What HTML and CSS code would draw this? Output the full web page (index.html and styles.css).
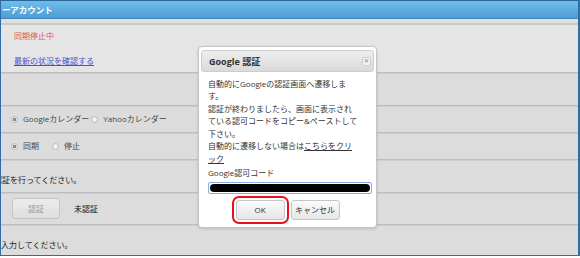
FILE: index.html
```html
<!DOCTYPE html>
<html lang="ja">
<head>
<meta charset="utf-8">
<title>Google 認証</title>
<link rel="stylesheet" href="styles.css">
</head>
<body>
<div class="frame">
  <div class="topbar">ーアカウント</div>
  <div class="strip"></div>
  <div class="status">
    <p class="stopped">同期停止中</p>
    <a class="check" href="#">最新の状況を確認する</a>
  </div>
  <div class="rows">
    <div class="row row-blank"></div>
    <div class="row row-radio">
      <label class="opt"><span class="radio checked"></span>Googleカレンダー</label>
      <label class="opt opt-next"><span class="radio"></span>Yahooカレンダー</label>
    </div>
    <div class="row row-radio">
      <label class="opt opt-sync"><span class="radio checked"></span>同期</label>
      <label class="opt"><span class="radio"></span>停止</label>
    </div>
    <div class="row row-note"><span class="note">認証を行ってください。</span></div>
    <div class="row row-auth">
      <button class="auth-btn" type="button">認証</button>
      <span class="auth-state">未認証</span>
    </div>
    <div class="row row-input"><span>入力してください。</span></div>
  </div>

  <div class="modal">
    <div class="modal-head">
      <span class="modal-title">Google 認証</span>
      <span class="modal-close">×</span>
    </div>
    <div class="modal-body">
      <p class="msg">自動的にGoogleの認証画面へ遷移しま<br>す。<br>認証が終わりましたら、画面に表示され<br>ている認可コードをコピー&amp;ペーストして<br>下さい。<br>自動的に遷移しない場合は<a href="#">こちらをクリ<br>ック</a></p>
      <div class="label">Google認可コード</div>
      <div class="code"><div class="code-fill"></div></div>
      <div class="actions">
        <button class="btn btn-ok" type="button">OK</button>
        <button class="btn" type="button">キャンセル</button>
      </div>
    </div>
  </div>
</div>
</body>
</html>
```
FILE: styles.css
```css
body {
  margin: 0;
  background: #fff;
  font-family: "Open Sans", "Noto Sans CJK JP", sans-serif;
  font-size: 8px;
  color: #222;
}

.frame {
  position: relative;
  width: 580px;
  height: 256px;
  box-sizing: border-box;
  border-left: 1px solid #2f6ea5;
  border-right: 2px solid #2f6ea5;
  border-bottom: 1px solid #2f6ea5;
  overflow: hidden;
  background: #dcdcdc;
  display: flex;
  flex-direction: column;
}

.topbar {
  height: 17px;
  flex: none;
  border-top: 1px solid #2b679c;
  border-bottom: 1px solid #3f86c0;
  background: linear-gradient(#6ebde9, #4f9dd5);
  color: #fff;
  font-weight: bold;
  font-size: 8.5px;
  line-height: 17px;
  padding-left: 1px;
}

.strip {
  height: 4px;
  flex: none;
  background: #dfdfdf;
  border-bottom: 2px solid #c9c9c9;
}

.status {
  height: 47px;
  flex: none;
  box-sizing: border-box;
  background: #e5e5e5;
  padding: 5px 0 0 13px;
}

.stopped {
  margin: 0 0 13px;
  color: #e45454;
  line-height: 12px;
}

.check {
  display: inline-block;
  color: #4455cc;
  text-decoration: underline;
  line-height: 12px;
}

.rows {
  flex: 1;
  display: flex;
  flex-direction: column;
}

.row {
  box-sizing: border-box;
  flex: none;
  display: flex;
  align-items: center;
  border-top: 1px solid #bdbdbd;
  box-shadow: inset 0 1px 0 #cecece;
  padding-left: 10px;
  line-height: 12px;
}

.row-blank { height: 33px; }
.row-radio { height: 27px; color: #444; }
.row-note {
  height: 33px;
  align-items: flex-end;
  padding: 0 0 6px 0;
}
.note { margin-left: -7px; color: #222; white-space: nowrap; }
.row-auth { height: 32px; padding-left: 11px; }
.row-input {
  flex: 1;
  align-items: flex-start;
  padding: 14px 0 0 0;
}

.opt {
  display: flex;
  align-items: center;
}
.opt-next { margin-left: 2px; }
.opt-sync { width: 41px; }

.radio {
  width: 7px;
  height: 7px;
  box-sizing: border-box;
  border-radius: 50%;
  border: 1px solid #bcbcbc;
  background: radial-gradient(circle, #f7f7f7 0, #e6e6e6 100%);
  margin-right: 5px;
}
.radio.checked {
  background: radial-gradient(circle, #8a8a8a 0, #8a8a8a 1.5px, #e9e9e9 2px);
}

.auth-btn {
  width: 48px;
  height: 21px;
  border: 1px solid #c4c4c4;
  border-radius: 3px;
  background: linear-gradient(#ececec, #dedede);
  color: #9a9a9a;
  font: inherit;
  padding: 0;
}
.auth-state {
  margin-left: 14px;
  color: #111;
}

.modal {
  position: absolute;
  left: 197px;
  top: 46px;
  width: 179px;
  height: 182px;
  box-sizing: border-box;
  background: #fff;
  border: 1px solid #c5c5c5;
  border-radius: 4px;
  padding: 3px 2px;
  box-shadow: 0 1px 3px rgba(0, 0, 0, 0.15);
  display: flex;
  flex-direction: column;
}

.modal-head {
  height: 22px;
  flex: none;
  box-sizing: border-box;
  border: 1px solid #cdcdcd;
  border-radius: 3px;
  background: linear-gradient(#eeeeee, #dadada);
  display: flex;
  align-items: center;
  justify-content: space-between;
  padding: 0 2px 0 7px;
}

.modal-title {
  font-weight: bold;
  font-size: 9px;
  color: #333;
}

.modal-close {
  width: 9px;
  height: 9px;
  box-sizing: border-box;
  border: 1px solid #cfcfcf;
  border-radius: 2px;
  background: #f3f3f3;
  color: #888;
  font-size: 7px;
  line-height: 7px;
  text-align: center;
  font-family: "DejaVu Sans", sans-serif;
}

.modal-body {
  padding: 5.5px 2px 0 7px;
  color: #333;
}

.msg {
  margin: 0;
  line-height: 12.6px;
  white-space: nowrap;
}
.msg a { color: #333; text-decoration: underline; }

.label {
  margin-top: 1px;
  line-height: 12.8px;
}

.code {
  margin-top: 3px;
  height: 12px;
  box-sizing: border-box;
  border: 1px solid #86aee6;
  border-radius: 2px;
  padding: 1px;
  background: #fff;
}
.code-fill {
  height: 100%;
  background: #000;
  border-radius: 4px;
}

.actions {
  display: flex;
  justify-content: center;
  gap: 6px;
  margin-top: 5.5px;
  padding-right: 5px;
}

.btn {
  width: 49px;
  height: 20px;
  padding: 0;
  border: 1px solid #c6c6c6;
  border-radius: 3px;
  background: linear-gradient(#fbfbfb, #e6e6e6);
  font: inherit;
  color: #333;
}

.btn-ok {
  outline: 2px solid #e8111b;
  outline-offset: 2px;
}
```
